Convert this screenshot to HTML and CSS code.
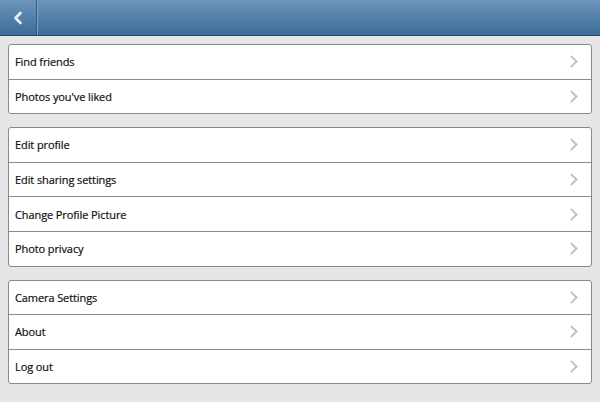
FILE: index.html
```html
<!DOCTYPE html>
<html lang="en">
<head>
    <meta charset="UTF-8">
    <title>Settings</title>
    <link rel="stylesheet" href="styles.css">
</head>
<body>

<div class="topbar">
    <div class="back">
        <svg width="12" height="14" viewBox="0 0 12 14">
            <path d="M8.5 2 L3.5 7 L8.5 12" fill="none" stroke="#e8eef5" stroke-width="2.6" stroke-linecap="round" stroke-linejoin="round"/>
        </svg>
    </div>
    <div class="title"></div>
</div>

<div class="content">
    <div class="group">
        <div class="row"><span>Find friends</span><i class="chev"></i></div>
        <div class="row"><span>Photos you've liked</span><i class="chev"></i></div>
    </div>
    <div class="group">
        <div class="row"><span>Edit profile</span><i class="chev"></i></div>
        <div class="row"><span>Edit sharing settings</span><i class="chev"></i></div>
        <div class="row"><span>Change Profile Picture</span><i class="chev"></i></div>
        <div class="row"><span>Photo privacy</span><i class="chev"></i></div>
    </div>
    <div class="group">
        <div class="row"><span>Camera Settings</span><i class="chev"></i></div>
        <div class="row"><span>About</span><i class="chev"></i></div>
        <div class="row"><span>Log out</span><i class="chev"></i></div>
    </div>
</div>

</body>
</html>
```

FILE: styles.css
```css
html, body {
    margin: 0;
    padding: 0;
    width: 100%;
    height: 100%;
    background-color: #e6e6e6;
    font-family: "Open Sans", "DejaVu Sans", sans-serif;
    color: #111;
    overflow: hidden;
}
.topbar {
    display: flex;
    height: 35px;
    background: linear-gradient(#6b95bb, #3d6c99);
    border-bottom: 1px solid #24496e;
}
.back {
    width: 36px;
    display: flex;
    align-items: center;
    justify-content: center;
    border-right: 1px solid #2f5a84;
    box-shadow: 1px 0 0 #7fa3c5;
}
.title {
    flex: 1;
}
.content {
    display: flex;
    flex-direction: column;
    gap: 13px;
    padding: 8px 8px;
}
.group {
    background: #fff;
    border: 1px solid #8a8a8a;
    border-radius: 3px;
}
.row {
    display: flex;
    align-items: center;
    justify-content: space-between;
    height: 33.6px;
    padding: 0 15px 0 6px;
    font-size: 11px;
    border-top: 1px solid #8a8a8a;
}
.row span {
    letter-spacing: -0.1px;
    -webkit-text-stroke: 0.2px #111;
}
.row:first-child {
    border-top: none;
}
.chev {
    width: 7px;
    height: 7px;
    border-top: 2.5px solid #c2c2c2;
    border-right: 2.5px solid #c2c2c2;
    transform: rotate(45deg);
}
```
